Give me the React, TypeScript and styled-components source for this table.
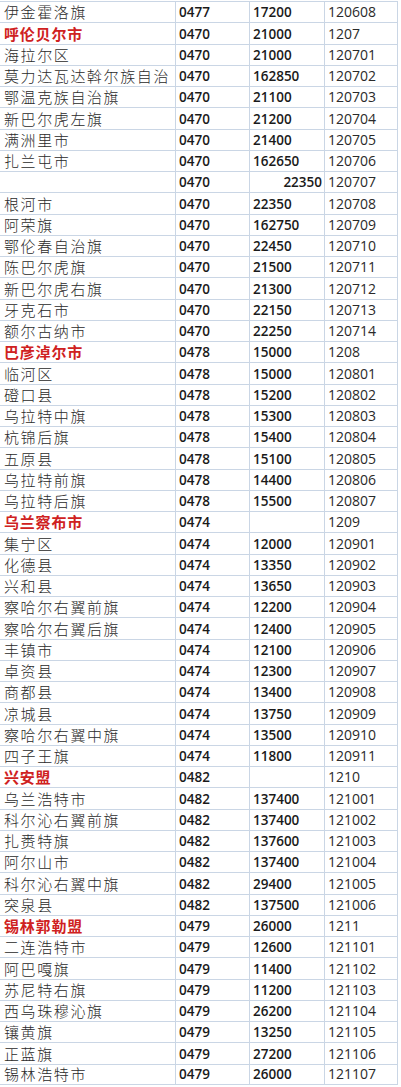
import styled, { createGlobalStyle } from 'styled-components';

const GlobalStyle = createGlobalStyle`
  body {
    margin: 0;
    background: #ffffff;
  }
`;

type Row = [string, string, string, string, boolean?];

const rows: Row[] = [
  ['伊金霍洛旗', '0477', '17200', '120608'],
  ['呼伦贝尔市', '0470', '21000', '1207', true],
  ['海拉尔区', '0470', '21000', '120701'],
  ['莫力达瓦达斡尔族自治', '0470', '162850', '120702'],
  ['鄂温克族自治旗', '0470', '21100', '120703'],
  ['新巴尔虎左旗', '0470', '21200', '120704'],
  ['满洲里市', '0470', '21400', '120705'],
  ['扎兰屯市', '0470', '162650', '120706'],
  ['', '0470', '22350', '120707'],
  ['根河市', '0470', '22350', '120708'],
  ['阿荣旗', '0470', '162750', '120709'],
  ['鄂伦春自治旗', '0470', '22450', '120710'],
  ['陈巴尔虎旗', '0470', '21500', '120711'],
  ['新巴尔虎右旗', '0470', '21300', '120712'],
  ['牙克石市', '0470', '22150', '120713'],
  ['额尔古纳市', '0470', '22250', '120714'],
  ['巴彦淖尔市', '0478', '15000', '1208', true],
  ['临河区', '0478', '15000', '120801'],
  ['磴口县', '0478', '15200', '120802'],
  ['乌拉特中旗', '0478', '15300', '120803'],
  ['杭锦后旗', '0478', '15400', '120804'],
  ['五原县', '0478', '15100', '120805'],
  ['乌拉特前旗', '0478', '14400', '120806'],
  ['乌拉特后旗', '0478', '15500', '120807'],
  ['乌兰察布市', '0474', '', '1209', true],
  ['集宁区', '0474', '12000', '120901'],
  ['化德县', '0474', '13350', '120902'],
  ['兴和县', '0474', '13650', '120903'],
  ['察哈尔右翼前旗', '0474', '12200', '120904'],
  ['察哈尔右翼后旗', '0474', '12400', '120905'],
  ['丰镇市', '0474', '12100', '120906'],
  ['卓资县', '0474', '12300', '120907'],
  ['商都县', '0474', '13400', '120908'],
  ['凉城县', '0474', '13750', '120909'],
  ['察哈尔右翼中旗', '0474', '13500', '120910'],
  ['四子王旗', '0474', '11800', '120911'],
  ['兴安盟', '0482', '', '1210', true],
  ['乌兰浩特市', '0482', '137400', '121001'],
  ['科尔沁右翼前旗', '0482', '137400', '121002'],
  ['扎赉特旗', '0482', '137600', '121003'],
  ['阿尔山市', '0482', '137400', '121004'],
  ['科尔沁右翼中旗', '0482', '29400', '121005'],
  ['突泉县', '0482', '137500', '121006'],
  ['锡林郭勒盟', '0479', '26000', '1211', true],
  ['二连浩特市', '0479', '12600', '121101'],
  ['阿巴嘎旗', '0479', '11400', '121102'],
  ['苏尼特右旗', '0479', '11200', '121103'],
  ['西乌珠穆沁旗', '0479', '26200', '121104'],
  ['镶黄旗', '0479', '13250', '121105'],
  ['正蓝旗', '0479', '27200', '121106'],
  ['锡林浩特市', '0479', '26000', '121107'],
];

const Sheet = styled.div`
  padding-top: 1px;
  width: 398px;
`;

const TableRow = styled.div`
  display: grid;
  grid-template-columns: 176px 74px 75px 73px;
  height: 21.25px;
  border-top: 1px solid #cad6e5;
  box-sizing: border-box;

  &:last-child {
    border-bottom: 1px solid #cad6e5;
  }
`;

const Cell = styled.div<{ $right?: boolean }>`
  display: flex;
  align-items: flex-end;
  justify-content: ${({ $right }) => ($right ? 'flex-end' : 'flex-start')};
  border-right: 1px solid #cad6e5;
  padding: 0 ${({ $right }) => ($right ? '2px' : '0')} 1px 4px;
  white-space: nowrap;
  color: #1a1a1a;
`;

const NameCell = styled(Cell)<{ $head?: boolean }>`
  font-family: 'Noto Sans CJK SC', sans-serif;
  font-size: 15px;
  line-height: 18px;
  letter-spacing: ${({ $head }) => ($head ? '0.8px' : '1.6px')};
  font-weight: ${({ $head }) => ($head ? 700 : 300)};
  color: ${({ $head }) => ($head ? '#cf2121' : '#2a2a2a')};
  padding-left: 4px;
`;

const BoldNumCell = styled(Cell)`
  font-family: 'Open Sans', 'Liberation Sans', sans-serif;
  font-weight: 600;
  font-size: 13.5px;
  line-height: 18px;
  padding-left: 3px;
`;

const CodeCell = styled(Cell)`
  font-family: 'Open Sans', 'Liberation Sans', sans-serif;
  font-weight: 400;
  font-size: 14px;
  line-height: 18px;
  color: #2a2a2a;
  padding-left: 3px;
`;

export default function App() {
  return (
    <>
      <GlobalStyle />
      <Sheet>
        {rows.map(([name, area, post, code, head], i) => (
          <TableRow key={i}>
            <NameCell $head={head}>{name}</NameCell>
            <BoldNumCell>{area}</BoldNumCell>
            <BoldNumCell $right={i === 8}>{post}</BoldNumCell>
            <CodeCell>{code}</CodeCell>
          </TableRow>
        ))}
      </Sheet>
    </>
  );
}
